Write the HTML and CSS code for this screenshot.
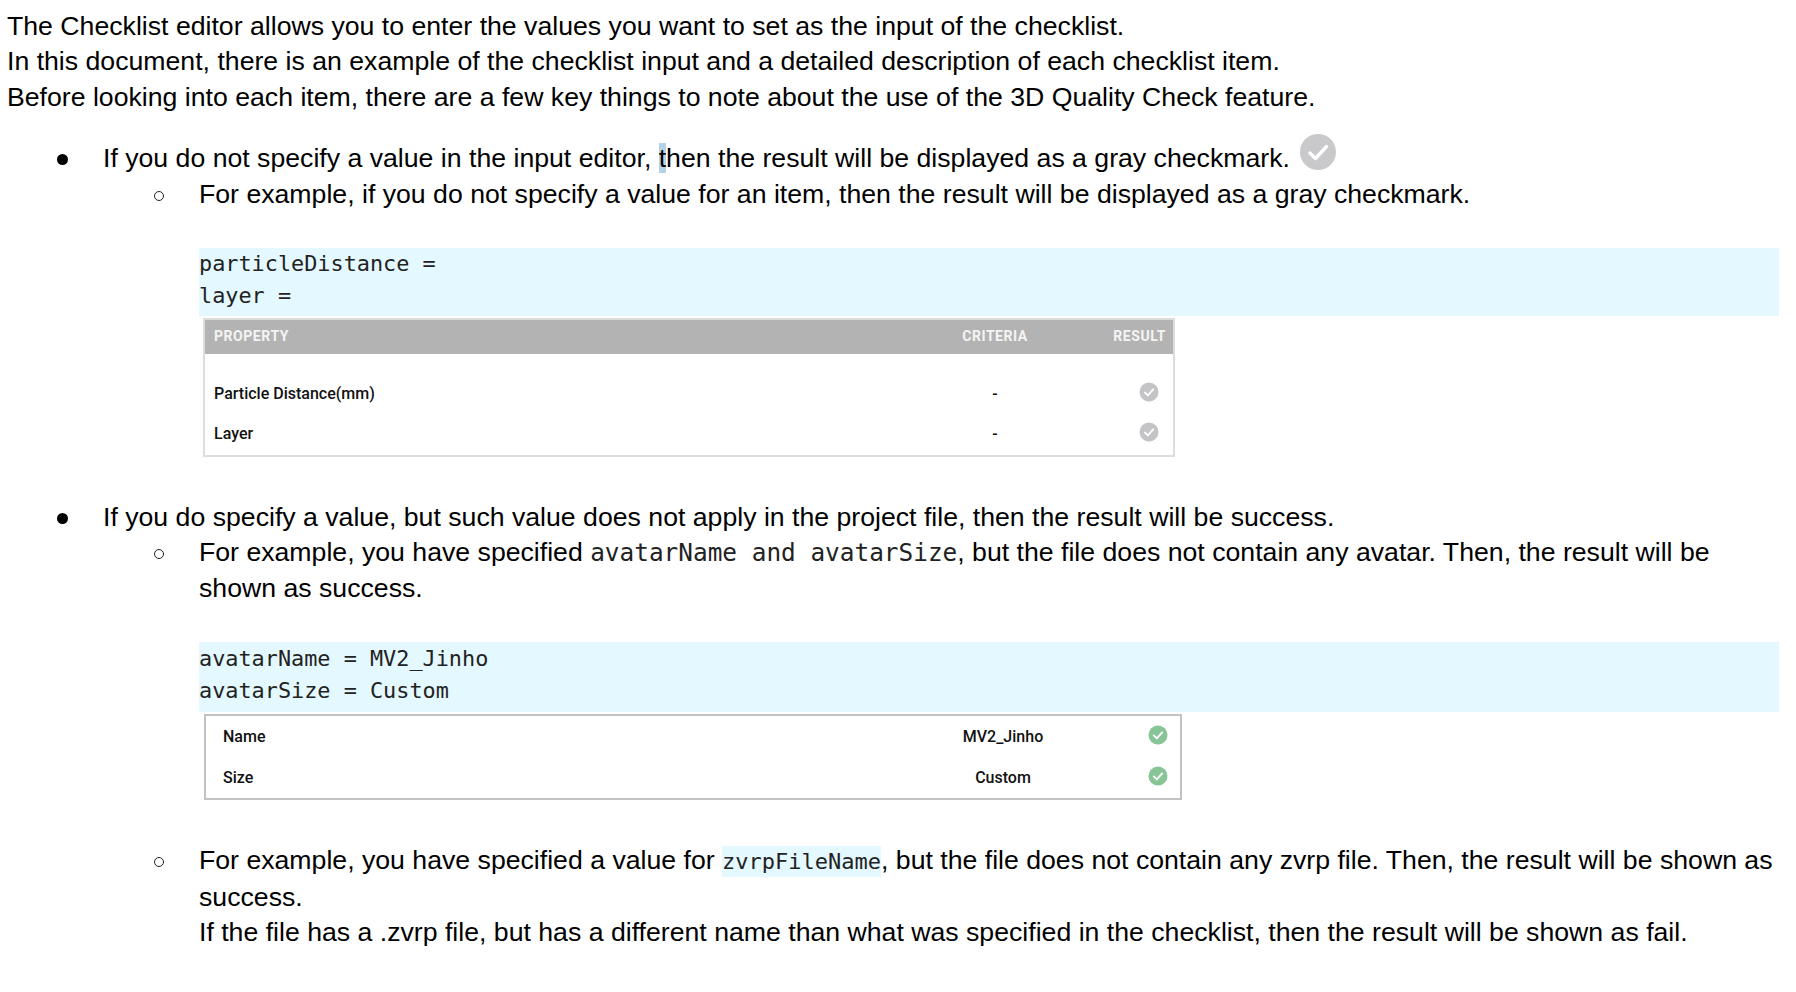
FILE: index.html
```html
<!DOCTYPE html>
<html lang="en">
<head>
<meta charset="utf-8">
<title>Checklist editor</title>
<link rel="stylesheet" href="styles.css">
</head>
<body>
<main class="doc">
  <p class="line">The Checklist editor allows you to enter the values you want to set as the input of the checklist.</p>
  <p class="line">In this document, there is an example of the checklist input and a detailed description of each checklist item.</p>
  <p class="line">Before looking into each item, there are a few key things to note about the use of the 3D Quality Check feature.</p>

  <ul class="bullets first">
    <li>
      <p class="line">If you do not specify a value in the input editor, <span class="sel">t</span>hen the result will be displayed as a gray checkmark.
        <svg class="big-check" viewBox="0 0 36 36" aria-hidden="true"><circle cx="18" cy="18" r="18" fill="#c9c9cb"/><path d="M10 19l5.5 5.5L26.5 12.5" fill="none" stroke="#fff" stroke-width="3.4" stroke-linecap="round" stroke-linejoin="round"/></svg>
      </p>
      <ul class="subs">
        <li>
          <p class="line">For example, if you do not specify a value for an item, then the result will be displayed as a gray checkmark.</p>
          <pre class="code code-a">particleDistance =
layer = </pre>
          <div class="panel panel-a">
            <div class="thead">
              <span class="c-prop">PROPERTY</span><span class="c-crit">CRITERIA</span><span class="c-res">RESULT</span>
            </div>
            <div class="tbody">
              <div class="row"><span class="c-prop">Particle Distance(mm)</span><span class="c-crit">-</span><span class="c-res"><svg class="tick" viewBox="0 0 20 20" aria-hidden="true"><circle cx="10" cy="10" r="9.5" fill="#c4c4c7"/><path d="M5.8 10.4l3 3 5.4-6" fill="none" stroke="#fff" stroke-width="1.9" stroke-linecap="round" stroke-linejoin="round"/></svg></span></div>
              <div class="row"><span class="c-prop">Layer</span><span class="c-crit">-</span><span class="c-res"><svg class="tick" viewBox="0 0 20 20" aria-hidden="true"><circle cx="10" cy="10" r="9.5" fill="#c4c4c7"/><path d="M5.8 10.4l3 3 5.4-6" fill="none" stroke="#fff" stroke-width="1.9" stroke-linecap="round" stroke-linejoin="round"/></svg></span></div>
            </div>
          </div>
        </li>
      </ul>
    </li>
    <li class="second">
      <p class="line">If you do specify a value, but such value does not apply in the project file, then the result will be success.</p>
      <ul class="subs">
        <li>
          <p class="line">For example, you have specified <code class="mono mono-lg">avatarName and avatarSize</code>, but the file does not contain any avatar. Then, the result will be shown as success.</p>
          <pre class="code code-b">avatarName = MV2_Jinho
avatarSize = Custom</pre>
          <div class="panel panel-b">
            <div class="row"><span class="c-prop">Name</span><span class="c-crit">MV2_Jinho</span><span class="c-res"><svg class="tick" viewBox="0 0 20 20" aria-hidden="true"><circle cx="10" cy="10" r="9.5" fill="#87c496"/><path d="M5.8 10.4l3 3 5.4-6" fill="none" stroke="#fff" stroke-width="1.9" stroke-linecap="round" stroke-linejoin="round"/></svg></span></div>
            <div class="row"><span class="c-prop">Size</span><span class="c-crit">Custom</span><span class="c-res"><svg class="tick" viewBox="0 0 20 20" aria-hidden="true"><circle cx="10" cy="10" r="9.5" fill="#87c496"/><path d="M5.8 10.4l3 3 5.4-6" fill="none" stroke="#fff" stroke-width="1.9" stroke-linecap="round" stroke-linejoin="round"/></svg></span></div>
          </div>
        </li>
        <li class="last-sub">
          <p class="line">For example, you have specified a value for <code class="mono hl">zvrpFileName</code>, but the file does not contain any zvrp file. Then, the result will be shown as success.<br>If the file has a .zvrp file, but has a different name than what was specified in the checklist, then the result will be shown as fail.</p>
        </li>
      </ul>
    </li>
  </ul>
</main>
</body>
</html>
```

FILE: styles.css
```css
html, body {
  margin: 0;
  padding: 0;
  background: #fff;
}
.doc {
  width: 1772px;
  padding: 9px 0 0 7px;
  color: #000;
  font-family: "Liberation Sans", Arial, sans-serif;
  font-size: 26.67px;
  line-height: 35.4px;
}
.line {
  margin: 0;
}
ul {
  margin: 0;
  padding: 0;
  list-style: none;
}
.bullets {
  padding-left: 96px;
}
.first {
  margin-top: 26px;
}
.bullets > li,
.subs > li {
  position: relative;
}
.bullets > li::before {
  content: "";
  position: absolute;
  left: -46px;
  top: 13px;
  width: 11px;
  height: 11px;
  border-radius: 50%;
  background: #000;
}
.subs > li::before {
  content: "";
  position: absolute;
  left: -45px;
  top: 14px;
  width: 8px;
  height: 8px;
  border: 1.3px solid #222;
  border-radius: 50%;
}
.subs {
  padding-left: 96px;
}
.second {
  margin-top: 43px;
}
.last-sub {
  margin-top: 43px;
}
.sel {
  background: #b5d3e8;
}
.big-check {
  width: 36px;
  height: 36px;
  margin: -10px 0 -10px 3px;
  vertical-align: 7px;
}
.mono {
  font-family: "DejaVu Sans Mono", "Liberation Mono", monospace;
  font-size: 22px;
  color: #222;
}
.mono-lg {
  font-size: 24.4px;
}
.hl {
  background: #e4f8ff;
  padding: 3px 0;
}
.code {
  margin: 0;
  background: #e4f8ff;
  color: #222;
  font-family: "DejaVu Sans Mono", "Liberation Mono", monospace;
  font-size: 21.85px;
  line-height: 32px;
  white-space: pre;
}
.code-a {
  margin-top: 36px;
  height: 68px;
}
.code-b {
  margin-top: 36px;
  height: 69px;
  padding-top: 1px;
}
.panel {
  box-sizing: border-box;
  font-family: Roboto, "Liberation Sans", sans-serif;
  font-weight: 500;
  font-size: 16px;
  color: #111;
}
.panel-a {
  width: 972px;
  height: 139px;
  margin: 2px 0 0 4px;
  border: 2px solid #dcdcdc;
}
.panel-b {
  width: 978px;
  height: 86px;
  margin: 2px 0 0 5px;
  border: 2px solid #c2c2c2;
}
.thead {
  display: flex;
  align-items: center;
  height: 34px;
  box-sizing: border-box;
  padding: 0 7px 2px 9px;
  background: #b3b3b3;
  color: #f4f4f4;
  font-size: 14px;
  font-weight: 700;
  letter-spacing: 0.55px;
  line-height: 1;
}
.tbody {
  padding-top: 20px;
}
.row {
  display: flex;
  align-items: center;
  height: 40px;
  padding: 0 7px 0 9px;
  line-height: 1;
}
.c-prop {
  flex: 1;
}
.c-crit {
  width: 114px;
  text-align: center;
  margin-right: 62px;
}
.c-res {
  width: 52px;
  display: flex;
  justify-content: flex-end;
}
.tick {
  width: 20px;
  height: 20px;
  margin: 0 7px 4px 0;
}
.panel-b .row {
  height: 41px;
  padding: 0 5px 0 17px;
}
.panel-b .c-crit {
  margin-right: 63px;
}
```
